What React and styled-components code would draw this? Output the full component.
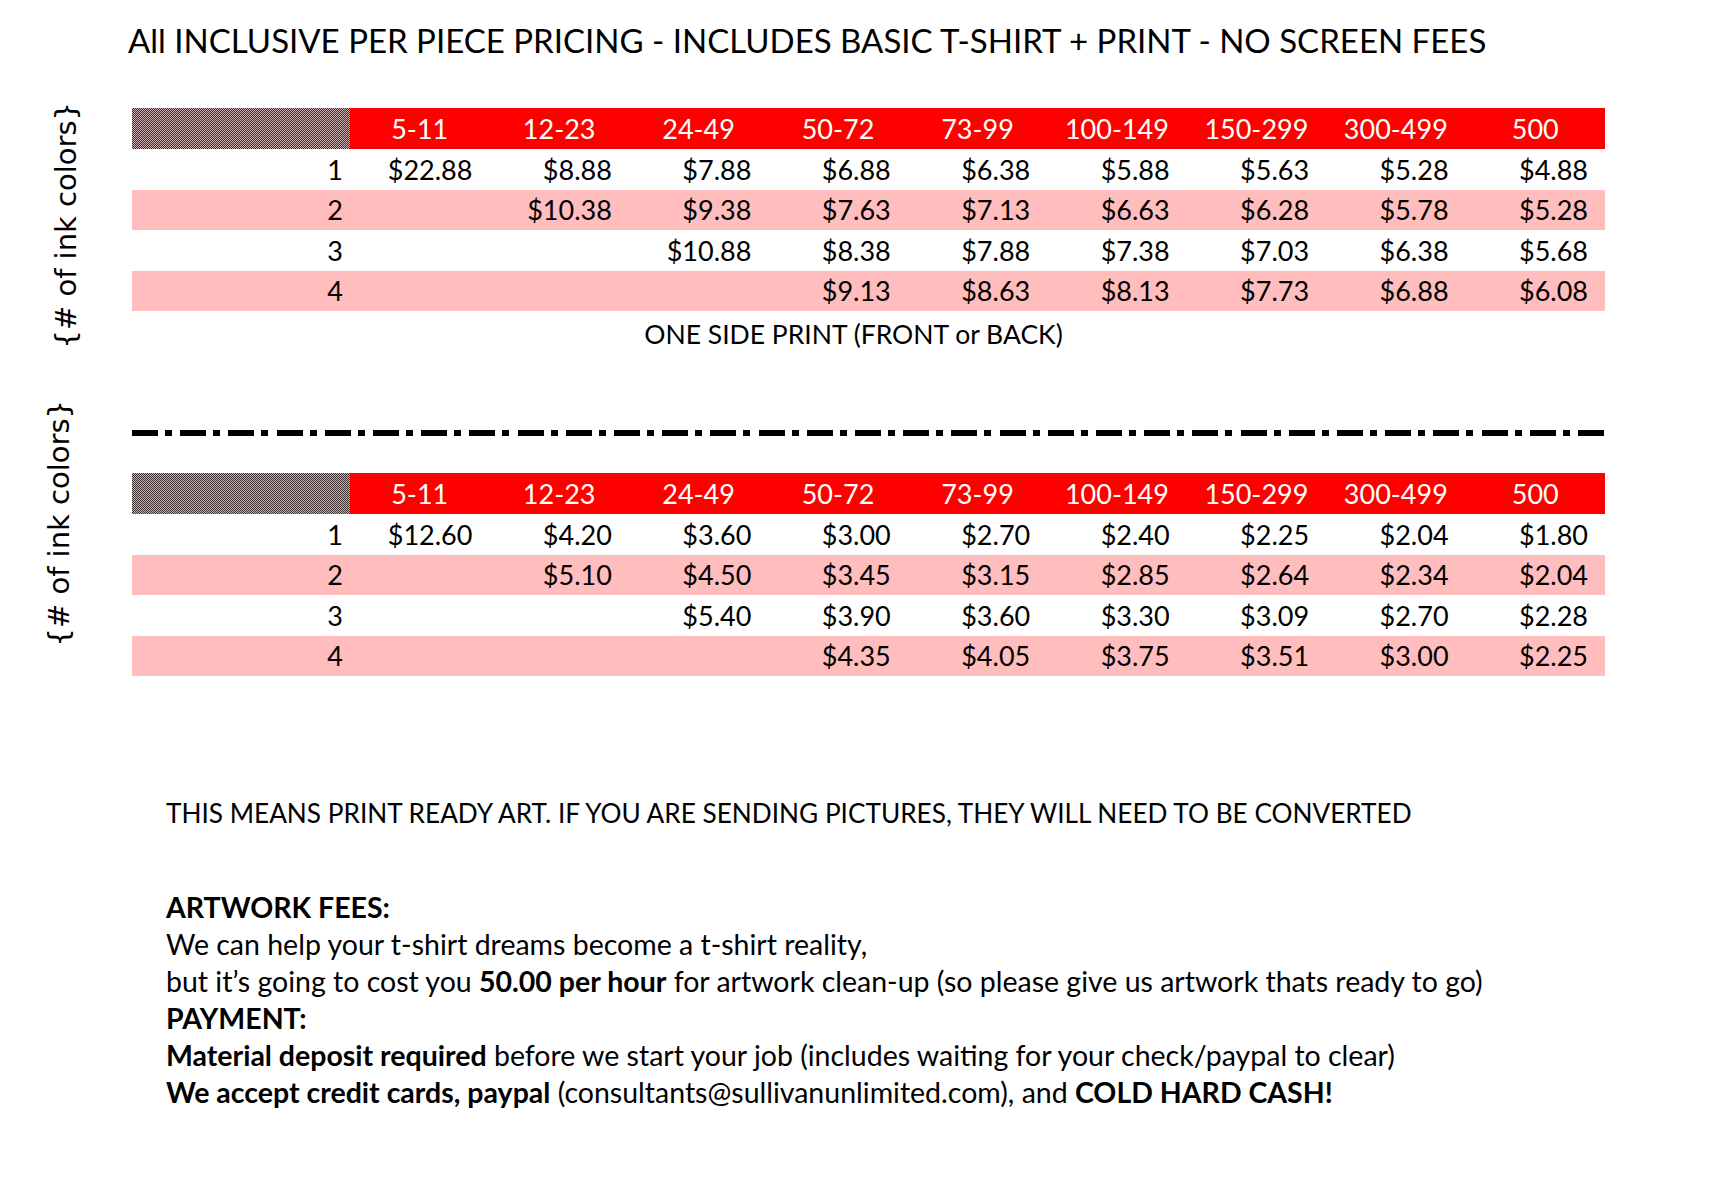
import styled, {createGlobalStyle} from "styled-components";

const ranges = ["5-11", "12-23", "24-49", "50-72", "73-99", "100-149", "150-299", "300-499", "500"];

const oneSide = [
    ["$22.88", "$8.88", "$7.88", "$6.88", "$6.38", "$5.88", "$5.63", "$5.28", "$4.88"],
    ["", "$10.38", "$9.38", "$7.63", "$7.13", "$6.63", "$6.28", "$5.78", "$5.28"],
    ["", "", "$10.88", "$8.38", "$7.88", "$7.38", "$7.03", "$6.38", "$5.68"],
    ["", "", "", "$9.13", "$8.63", "$8.13", "$7.73", "$6.88", "$6.08"],
];

const secondSide = [
    ["$12.60", "$4.20", "$3.60", "$3.00", "$2.70", "$2.40", "$2.25", "$2.04", "$1.80"],
    ["", "$5.10", "$4.50", "$3.45", "$3.15", "$2.85", "$2.64", "$2.34", "$2.04"],
    ["", "", "$5.40", "$3.90", "$3.60", "$3.30", "$3.09", "$2.70", "$2.28"],
    ["", "", "", "$4.35", "$4.05", "$3.75", "$3.51", "$3.00", "$2.25"],
];

function PriceTable({rows}) {
    return (
        <Table>
            <Corner/>
            {ranges.map(r => <HeadCell key={r}>{r}</HeadCell>)}
            {rows.map((row, i) => (
                <Row key={i} $pink={i % 2 === 1}>
                    <ColorCount>{i + 1}</ColorCount>
                    {row.map((price, j) => <Price key={j}>{price}</Price>)}
                </Row>
            ))}
        </Table>
    )
}

export default function App() {
    return (
        <Page>
            <GlobalStyle/>
            <Title>All INCLUSIVE PER PIECE PRICING - INCLUDES BASIC T-SHIRT + PRINT - NO SCREEN FEES</Title>

            <Section $top={42}>
                <LabelCol>
                    <SideLabel>{"{# of ink colors}"}</SideLabel>
                </LabelCol>
                <Content $pad={6}>
                    <PriceTable rows={oneSide}/>
                    <Caption>ONE SIDE PRINT (FRONT or BACK)</Caption>
                </Content>
            </Section>

            <Section $top={46}>
                <LabelCol $nudge={14}>
                    <SideLabel>{"{# of ink colors}"}</SideLabel>
                </LabelCol>
                <Content $pad={30}>
                    <DashLine/>
                    <PriceTable rows={secondSide}/>
                </Content>
            </Section>

            <Notes>
                <Notice>THIS MEANS PRINT READY ART. IF YOU ARE SENDING PICTURES, THEY WILL NEED TO BE CONVERTED</Notice>
                <Terms>
                    <p><b>ARTWORK FEES:</b></p>
                    <p>We can help your t-shirt dreams become a t-shirt reality,</p>
                    <p>but it’s going to cost you <b>50.00 per hour</b> for artwork clean-up (so please give us artwork thats ready to go)</p>
                    <p><b>PAYMENT:</b></p>
                    <p><b>Material deposit required</b> before we start your job (includes waiting for your check/paypal to clear)</p>
                    <p><b>We accept credit cards, paypal</b> (consultants@sullivanunlimited.com), and <b>COLD HARD CASH!</b></p>
                </Terms>
            </Notes>
        </Page>
    )
}

const GlobalStyle = createGlobalStyle`
    body {
        margin: 0;
        background: #fff;
        color: #000;
        font-family: Lato, "Open Sans", sans-serif;
    }
`

const Page = styled.div`
    width: 1720px;
    min-height: 1196px;
    display: flex;
    flex-direction: column;
`

const Title = styled.h1`
    margin: 0;
    padding: 20px 0 0 128px;
    font-size: 33px;
    font-weight: 400;
    line-height: 40px;
    white-space: nowrap;
`

const Section = styled.div`
    display: flex;
    align-items: flex-start;
    margin-top: ${p => p.$top}px;
`

const LabelCol = styled.div`
    width: 132px;
    flex: none;
    display: flex;
    justify-content: center;
    box-sizing: border-box;
    padding-right: ${p => p.$nudge || 0}px;
`

const SideLabel = styled.div`
    writing-mode: vertical-rl;
    transform: rotate(180deg);
    font-family: "DejaVu Sans", sans-serif;
    font-size: 29px;
    line-height: 34px;
    white-space: nowrap;
`

const Content = styled.div`
    width: 1473px;
    display: flex;
    flex-direction: column;
    padding-top: ${p => p.$pad}px;
`

const Table = styled.div`
    display: grid;
    grid-template-columns: 218px repeat(9, 1fr);
    grid-auto-rows: 40.5px;
    grid-template-rows: 41px;
    font-size: 27px;
`

const Corner = styled.div`
    background: repeating-conic-gradient(#3f3131 0% 25%, #c8aeae 0% 50%) 0 0 / 2px 2px;
`

const HeadCell = styled.div`
    background: #ff0000;
    color: #fff;
    display: flex;
    align-items: center;
    justify-content: center;
`

const Row = styled.div`
    grid-column: 1 / -1;
    display: grid;
    grid-template-columns: subgrid;
    background: ${p => p.$pink ? "#ffbdbd" : "#fff"};
`

const ColorCount = styled.div`
    display: flex;
    align-items: center;
    justify-content: flex-end;
    padding-right: 7px;
`

const Price = styled.div`
    display: flex;
    align-items: center;
    justify-content: flex-end;
    padding-right: 17px;
`

const Caption = styled.div`
    margin-top: 3px;
    padding-right: 30px;
    font-size: 26.5px;
    line-height: 40px;
    text-align: center;
`

const DashLine = styled.div`
    height: 6px;
    margin-bottom: 37px;
    background: repeating-linear-gradient(90deg, #000 0 26px, transparent 26px 33px, #000 33px 40px, transparent 40px 48.2px);
`

const Notes = styled.div`
    margin-top: 119px;
    padding-left: 166px;
    line-height: 37px;
`

const Notice = styled.div`
    margin-bottom: 57px;
    font-size: 26.2px;
`

const Terms = styled.div`
    font-size: 28.5px;
    & > p {
        margin: 0;
    }
    & b {
        font-weight: 700;
    }
`
